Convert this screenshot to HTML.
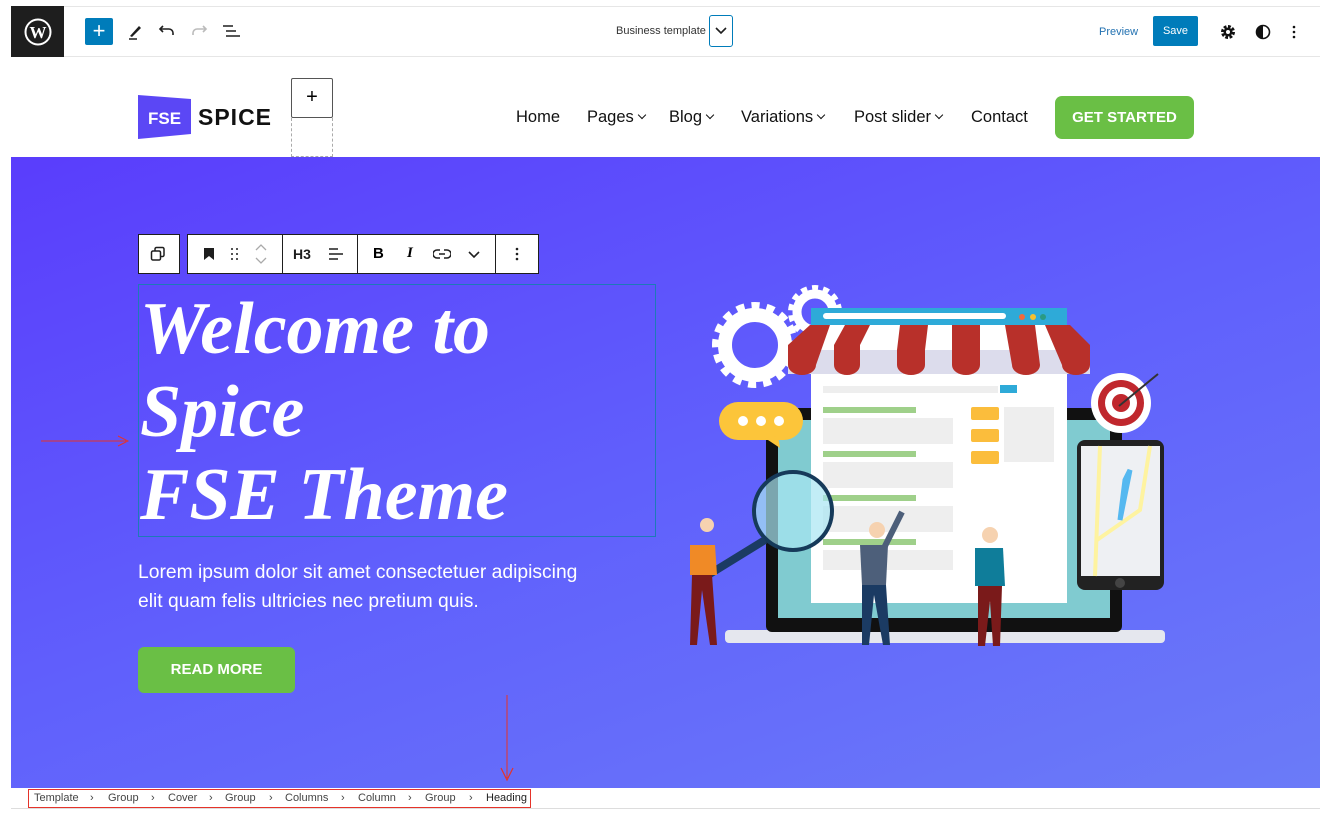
<!DOCTYPE html>
<html><head><meta charset="utf-8"><style>
*{margin:0;padding:0;box-sizing:border-box}
body{width:1330px;height:815px;background:#fff;position:relative;overflow:hidden;font-family:"Liberation Sans",sans-serif}
.abs{position:absolute}
.top{left:11px;top:6px;width:1309px;height:51px;border-top:1px solid #e6e6e6;border-bottom:1px solid #e6e6e6;background:#fff}
.nav a{position:absolute;top:108px;font-size:16.5px;color:#111;white-space:nowrap}
.nav i{display:inline-block;width:6px;height:6px;border-right:1.5px solid #111;border-bottom:1.5px solid #111;transform:rotate(45deg);margin:0 0 4px 5px}
.hero{left:11px;top:157px;width:1309px;height:631px;background:linear-gradient(160deg,#5a3dfc 0%,#6060fc 50%,#6b7bf8 100%)}
.tb{position:absolute;top:234px;height:40px;background:#fff;border:1px solid #1e1e1e}
h1{position:absolute;left:140px;top:288px;font-family:"Liberation Serif",serif;font-style:italic;font-weight:bold;font-size:74px;line-height:83px;color:#fff;white-space:nowrap}
.bc{position:absolute;top:792px;font-size:11px;color:#444}
</style></head><body>
<div class="abs top"></div>
<div class="abs" style="left:11px;top:6px;width:53px;height:51px;background:#1e1e1e"></div>
<svg class="abs" style="left:24px;top:18px" width="28" height="28" viewBox="0 0 28 28"><circle cx="14" cy="14" r="12.5" fill="none" stroke="#fff" stroke-width="2"/><text x="14" y="20" font-family="Liberation Serif" font-weight="bold" font-size="17" fill="#fff" text-anchor="middle">W</text></svg>
<div class="abs" style="left:85px;top:18px;width:28px;height:27px;background:#007cba;border-radius:2px;color:#fff;font-size:22px;line-height:26px;text-align:center">+</div>
<svg class="abs" style="left:127px;top:22px" width="18" height="18"><path d="M3 14 L12 4 L14 6 L5 15Z" fill="#1e1e1e"/><path d="M2 17h8" stroke="#1e1e1e" stroke-width="1.5"/></svg>
<svg class="abs" style="left:158px;top:23px" width="18" height="16" fill="none" stroke="#1e1e1e" stroke-width="1.6"><path d="M5 3 L2 6 L5 9"/><path d="M2 6h9a4 4 0 0 1 4 4v2"/></svg>
<svg class="abs" style="left:190px;top:23px" width="18" height="16" fill="none" stroke="#bbb" stroke-width="1.6"><path d="M13 3 L16 6 L13 9"/><path d="M16 6H7a4 4 0 0 0-4 4v2"/></svg>
<svg class="abs" style="left:222px;top:24px" width="18" height="14" stroke="#1e1e1e" stroke-width="1.6"><path d="M1 2h10M4 7h10M4 12h14"/></svg>
<div class="abs" style="left:616px;top:25px;font-size:11px;color:#333">Business template</div>
<div class="abs" style="left:709px;top:15px;width:24px;height:32px;border:1.5px solid #007cba;border-radius:3px"></div>
<svg class="abs" style="left:715px;top:27px" width="12" height="8" fill="none" stroke="#1e1e1e" stroke-width="1.6"><path d="M1 1l5 5 5-5"/></svg>
<div class="abs" style="left:1099px;top:26px;font-size:11px;color:#2271b1">Preview</div>
<div class="abs" style="left:1153px;top:16px;width:45px;height:30px;background:#007cba;border-radius:2px;color:#fff;font-size:11px;line-height:30px;text-align:center">Save</div>
<svg class="abs" style="left:1220px;top:24px" width="16" height="16"><circle cx="8" cy="8" r="5" fill="none" stroke="#111" stroke-width="4" stroke-dasharray="2.5 1.4"/><circle cx="8" cy="8" r="4.5" fill="#111"/><circle cx="8" cy="8" r="2" fill="#fff"/></svg>
<svg class="abs" style="left:1255px;top:24px" width="16" height="16"><circle cx="8" cy="8" r="6.5" fill="none" stroke="#111" stroke-width="1.6"/><path d="M8 1.5a6.5 6.5 0 0 0 0 13z" fill="#111"/></svg>
<svg class="abs" style="left:1290px;top:24px" width="8" height="16" fill="#111"><circle cx="4" cy="3" r="1.3"/><circle cx="4" cy="8" r="1.3"/><circle cx="4" cy="13" r="1.3"/></svg>

<svg class="abs" style="left:138px;top:95px" width="55" height="44"><path d="M0 0 L53 4 L53 39 L0 44Z" fill="#5b47f5"/><text x="10" y="29" font-family="Liberation Sans" font-weight="bold" font-size="17" fill="#fff">FSE</text></svg>
<div class="abs" style="left:198px;top:104px;font-size:23px;font-weight:bold;letter-spacing:1px;color:#111">SPICE</div>
<div class="abs" style="left:291px;top:78px;width:42px;height:40px;border:1.5px solid #555;border-radius:2px;background:#fff;font-size:20px;text-align:center;line-height:37px">+</div>
<div class="abs" style="left:291px;top:118px;width:42px;height:39px;border:1px dashed #aaa;border-top:none"></div>
<div class="nav">
<a style="left:516px">Home</a><a style="left:587px">Pages<i></i></a><a style="left:669px">Blog<i></i></a><a style="left:741px">Variations<i></i></a><a style="left:854px">Post slider<i></i></a><a style="left:971px">Contact</a></div>
<div class="abs" style="left:1055px;top:96px;width:139px;height:43px;background:#6abf45;border-radius:7px;color:#fff;font-weight:bold;font-size:15px;line-height:43px;text-align:center">GET STARTED</div>

<div class="abs hero"></div>
<div class="tb" style="left:138px;width:42px"></div>
<div class="tb" style="left:187px;width:352px"></div>
<div class="abs" style="left:282px;top:234px;width:1px;height:40px;background:#1e1e1e"></div>
<div class="abs" style="left:357px;top:234px;width:1px;height:40px;background:#1e1e1e"></div>
<div class="abs" style="left:495px;top:234px;width:1px;height:40px;background:#1e1e1e"></div>
<svg class="abs" style="left:150px;top:246px" width="16" height="16" fill="none" stroke="#1e1e1e" stroke-width="1.5"><rect x="5" y="1.5" width="9" height="9" rx="1.5"/><rect x="1.5" y="5" width="9" height="9" rx="1.5" fill="#fff"/></svg>
<svg class="abs" style="left:203px;top:247px" width="12" height="14"><path d="M1 1h10v12l-5-4-5 4z" fill="#1e1e1e"/></svg>
<svg class="abs" style="left:230px;top:247px" width="10" height="14" fill="#1e1e1e"><circle cx="2" cy="2" r="1"/><circle cx="7" cy="2" r="1"/><circle cx="2" cy="7" r="1"/><circle cx="7" cy="7" r="1"/><circle cx="2" cy="12" r="1"/><circle cx="7" cy="12" r="1"/></svg>
<svg class="abs" style="left:254px;top:243px" width="14" height="22" fill="none" stroke="#aaa" stroke-width="1.3"><path d="M2 7l5-5 5 5M2 15l5 5 5-5"/></svg>
<div class="abs" style="left:293px;top:246px;font-weight:bold;font-size:14px;color:#1e1e1e">H3</div>
<svg class="abs" style="left:328px;top:247px" width="16" height="14" stroke="#1e1e1e" stroke-width="1.5"><path d="M1 2h9M1 7h14M1 12h9"/></svg>
<div class="abs" style="left:373px;top:245px;font-weight:bold;font-size:15px">B</div>
<div class="abs" style="left:407px;top:245px;font-style:italic;font-weight:bold;font-size:15px;font-family:'Liberation Serif'">I</div>
<svg class="abs" style="left:433px;top:248px" width="18" height="12" fill="none" stroke="#1e1e1e" stroke-width="1.5"><path d="M7 2H4a4 4 0 0 0 0 8h3M11 2h3a4 4 0 0 1 0 8h-3M6 6h6"/></svg>
<svg class="abs" style="left:468px;top:251px" width="12" height="8" fill="none" stroke="#1e1e1e" stroke-width="1.6"><path d="M1 1l5 5 5-5"/></svg>
<svg class="abs" style="left:513px;top:246px" width="8" height="16" fill="#1e1e1e"><circle cx="4" cy="3" r="1.3"/><circle cx="4" cy="8" r="1.3"/><circle cx="4" cy="13" r="1.3"/></svg>
<div class="abs" style="left:138px;top:284px;width:518px;height:253px;border:1px solid #1d7ab8"></div>
<h1>Welcome to<br>Spice<br>FSE Theme</h1>
<div class="abs" style="left:138px;top:558px;font-size:19.3px;line-height:29px;color:#fff">Lorem ipsum dolor sit amet consectetuer adipiscing<br>elit quam felis ultricies nec pretium quis.</div>
<div class="abs" style="left:138px;top:647px;width:157px;height:46px;background:#6abf45;border-radius:6px;color:#fff;font-weight:bold;font-size:15px;line-height:46px;text-align:center">READ MORE</div>

<svg class="abs" style="left:0;top:0" width="1330" height="815">
<g><circle cx="755" cy="345" r="30" fill="none" stroke="#fff" stroke-width="14"/><circle cx="755" cy="345" r="39" fill="none" stroke="#fff" stroke-width="8" stroke-dasharray="8 7"/>
<circle cx="815" cy="312" r="18" fill="none" stroke="#fff" stroke-width="9"/><circle cx="815" cy="312" r="24" fill="none" stroke="#fff" stroke-width="6" stroke-dasharray="6 5"/></g>
<rect x="725" y="630" width="440" height="13" rx="4" fill="#e5e7ee"/>
<rect x="766" y="408" width="356" height="224" rx="6" fill="#111"/>
<rect x="778" y="420" width="332" height="198" fill="#80cbd0"/>
<rect x="811" y="308" width="256" height="295" fill="#fff"/>
<rect x="811" y="308" width="256" height="17" fill="#2eaad8"/>
<rect x="823" y="313" width="183" height="6" rx="3" fill="#fff"/>
<circle cx="1022" cy="317" r="3" fill="#f26a3b"/><circle cx="1033" cy="317" r="3" fill="#f7c02e"/><circle cx="1043" cy="317" r="3" fill="#2a9a83"/>
<rect x="788" y="350" width="302" height="24" fill="#dcdcec"/>
<path d="M830 325 L810 325 L788 345 L788 365 a14 10 0 0 0 28 0Z M845 325 L870 325 L860 345 L860 365 a13 10 0 0 1 -26 0 L834 345Z M900 325 L928 325 L925 350 L925 365 a14 10 0 0 1 -28 0 L897 350Z M952 325 L980 325 L980 365 a14 10 0 0 1 -28 0Z M1005 325 L1035 325 L1040 365 a14 10 0 0 1 -28 0Z M1045 325 L1070 325 L1090 345 L1090 365 a14 10 0 0 1 -28 0Z" fill="#b8302a"/>
<rect x="823" y="386" width="175" height="7" fill="#eee"/><rect x="1000" y="385" width="17" height="8" fill="#2eaad8"/>
<g fill="#9fd08a"><rect x="823" y="407" width="93" height="6"/><rect x="823" y="451" width="93" height="6"/><rect x="823" y="495" width="93" height="6"/><rect x="823" y="539" width="93" height="6"/></g>
<g fill="#eee"><rect x="823" y="418" width="130" height="26"/><rect x="823" y="462" width="130" height="26"/><rect x="823" y="506" width="130" height="26"/><rect x="823" y="550" width="130" height="20"/><rect x="1004" y="407" width="50" height="55"/></g>
<g fill="#fbbd3c"><rect x="971" y="407" width="28" height="13" rx="2"/><rect x="971" y="429" width="28" height="13" rx="2"/><rect x="971" y="451" width="28" height="13" rx="2"/></g>
<rect x="719" y="402" width="84" height="38" rx="19" fill="#fcc53a"/><path d="M765 438 L780 448 L778 436Z" fill="#fcc53a"/>
<g fill="#fff"><circle cx="743" cy="421" r="5"/><circle cx="761" cy="421" r="5"/><circle cx="779" cy="421" r="5"/></g>
<circle cx="1121" cy="403" r="30" fill="#fff"/><circle cx="1121" cy="403" r="23" fill="#c0272d"/><circle cx="1121" cy="403" r="16" fill="#fff"/><circle cx="1121" cy="403" r="9" fill="#c0272d"/>
<path d="M1119 406 L1158 374" stroke="#333" stroke-width="2"/>
<rect x="1077" y="440" width="87" height="150" rx="8" fill="#222"/><rect x="1081" y="446" width="79" height="130" fill="#eef0f3"/>
<path d="M1100 446 L1095 576" stroke="#fef3a0" stroke-width="4"/><path d="M1150 446 L1140 510 L1097 540" stroke="#fef3a0" stroke-width="4" fill="none"/><path d="M1130 470 L1120 520 L1125 480Z" fill="#55b8f0" stroke="#55b8f0" stroke-width="5"/>
<circle cx="1120" cy="583" r="5" fill="#444"/>
<circle cx="793" cy="511" r="39" fill="#a8e6f2" fill-opacity=".7" stroke="#163a5a" stroke-width="4"/>
<path d="M765 540 L700 580" stroke="#1b3b63" stroke-width="8"/>
<g><circle cx="707" cy="525" r="7" fill="#f6d2b0"/><path d="M690 545 h25 l2 30 h-27z" fill="#f08a26"/><path d="M692 575 h20 l5 70 h-7 l-8-55 -5 55 h-7z" fill="#7a1a1a"/>
<circle cx="877" cy="530" r="8" fill="#f6d2b0"/><path d="M860 545 h28 l-2 40 h-24z" fill="#4d5f7a"/><path d="M884 548 L902 512" stroke="#4d5f7a" stroke-width="6"/><path d="M862 585 h24 l4 60 h-7 l-9-50 -5 50 h-7z" fill="#1b3b63"/>
<circle cx="990" cy="535" r="8" fill="#f6d2b0"/><path d="M975 548 h28 l2 38 h-30z" fill="#0f7d9a"/><path d="M978 586 h24 l-2 60 h-7 l-3-45 -5 45 h-7z" fill="#7a1a1a"/></g>
<path d="M41 441 H126" stroke="#e5332a" stroke-width="1"/><path d="M118 436 L128 441 L118 446" fill="none" stroke="#e5332a" stroke-width="1"/>
<path d="M507 695 V778" stroke="#e5332a" stroke-width="1"/><path d="M501 768 L507 780 L513 768" fill="none" stroke="#e5332a" stroke-width="1.2"/>
</svg>

<div class="abs" style="left:11px;top:808px;width:1309px;height:1px;background:#ddd"></div>
<div class="abs" style="left:28px;top:789px;width:503px;height:19px;border:1.5px solid #e5332a"></div>
<div class="bc" style="left:34px">Template</div><div class="bc" style="left:90px">›</div>
<div class="bc" style="left:108px">Group</div><div class="bc" style="left:151px">›</div>
<div class="bc" style="left:168px">Cover</div><div class="bc" style="left:209px">›</div>
<div class="bc" style="left:225px">Group</div><div class="bc" style="left:269px">›</div>
<div class="bc" style="left:285px">Columns</div><div class="bc" style="left:341px">›</div>
<div class="bc" style="left:358px">Column</div><div class="bc" style="left:408px">›</div>
<div class="bc" style="left:425px">Group</div><div class="bc" style="left:469px">›</div>
<div class="bc" style="left:486px;color:#1e1e1e">Heading</div>
</body></html>
